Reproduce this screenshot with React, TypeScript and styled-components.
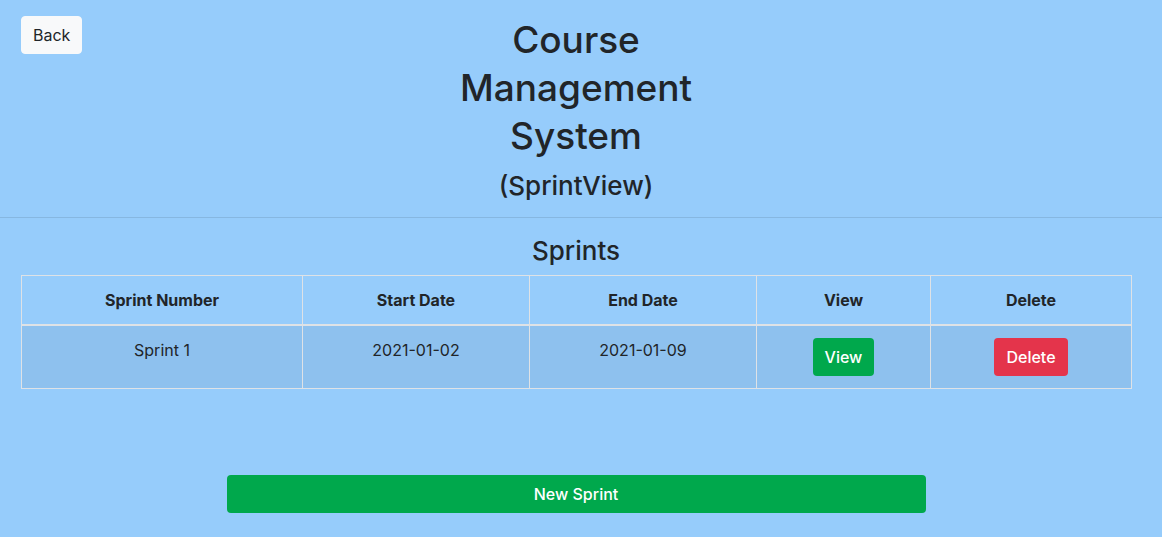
import React from "react";
import styled, { createGlobalStyle } from "styled-components";

const sprints = [
  { id: 1, name: "Sprint 1", start: "2021-01-02", end: "2021-01-09" },
];

const columns = [
  { label: "Sprint Number", width: 281 },
  { label: "Start Date", width: 227 },
  { label: "End Date", width: 227 },
  { label: "View", width: 174 },
  { label: "Delete", width: 201 },
];

const GlobalStyle = createGlobalStyle`
  html, body {
    margin: 0;
    background-color: #96ccfb;
  }
  body {
    font-family: Inter, "Liberation Sans", sans-serif;
    font-size: 16px;
    line-height: 1.5;
    color: #212529;
  }
`;

export default function App() {
  return (
    <>
      <GlobalStyle />
      <Page>
        <Header>
          <BackCell>
            <BackButton>Back</BackButton>
          </BackCell>
          <TitleBlock>
            <Title>Course Management System</Title>
            <SubTitle>(SprintView)</SubTitle>
          </TitleBlock>
          <div />
        </Header>
        <Divider />
        <Content>
          <SectionTitle>Sprints</SectionTitle>
          <Table>
            <colgroup>
              {columns.map((c) => (
                <Col key={c.label} $width={c.width} />
              ))}
            </colgroup>
            <thead>
              <tr>
                {columns.map((c) => (
                  <Th key={c.label}>{c.label}</Th>
                ))}
              </tr>
            </thead>
            <tbody>
              {sprints.map((s) => (
                <Row key={s.id}>
                  <Td>{s.name}</Td>
                  <Td>{s.start}</Td>
                  <Td>{s.end}</Td>
                  <Td>
                    <SmallButton $variant="success">View</SmallButton>
                  </Td>
                  <Td>
                    <SmallButton $variant="danger">Delete</SmallButton>
                  </Td>
                </Row>
              ))}
            </tbody>
          </Table>
          <Footer>
            <WideButton>New Sprint</WideButton>
          </Footer>
        </Content>
      </Page>
    </>
  );
}

const Page = styled.div`
  min-height: 537px;
`;

const Header = styled.header`
  display: grid;
  grid-template-columns: 1fr 260px 1fr;
  padding: 16px 31px 14px 21px;
`;

const BackCell = styled.div`
  display: flex;
  align-items: flex-start;
`;

const BackButton = styled.button`
  font-family: inherit;
  font-size: 16px;
  line-height: 1.5;
  padding: 6px 11px;
  color: #212529;
  background-color: #f8f9fa;
  border: 1px solid #f8f9fa;
  border-radius: 4px;
  cursor: pointer;
`;

const TitleBlock = styled.div`
  text-align: center;
`;

const Title = styled.h1`
  margin: 0 0 9px;
  font-size: 37px;
  font-weight: 500;
  line-height: 48px;
`;

const SubTitle = styled.h3`
  margin: 0;
  font-size: 26px;
  font-weight: 500;
  line-height: 34px;
`;

const Divider = styled.hr`
  margin: 0;
  border: 0;
  border-top: 1px solid rgba(0, 0, 0, 0.1);
`;

const Content = styled.main`
  padding: 0 31px 0 21px;
`;

const SectionTitle = styled.h3`
  margin: 16px 0 7px;
  text-align: center;
  font-size: 26px;
  font-weight: 500;
  line-height: 34px;
`;

const Table = styled.table`
  width: 100%;
  table-layout: fixed;
  border-collapse: collapse;
  text-align: center;
`;

const Col = styled.col<{ $width: number }>`
  width: ${({ $width }) => $width}px;
`;

const Th = styled.th`
  padding: 12px;
  font-weight: 700;
  vertical-align: bottom;
  border: 1px solid #dee2e6;
  border-bottom-width: 2px;
`;

const Row = styled.tr`
  background-color: rgba(0, 0, 0, 0.05);
`;

const Td = styled.td`
  padding: 12px;
  vertical-align: top;
  border: 1px solid #dee2e6;
`;

const SmallButton = styled.button<{ $variant: "success" | "danger" }>`
  font-family: inherit;
  font-size: 16px;
  font-weight: 500;
  line-height: 1.5;
  padding: 6px 11px;
  color: #fff;
  background-color: ${({ $variant }) =>
    $variant === "success" ? "#00a84c" : "#e4344b"};
  border: 1px solid transparent;
  border-radius: 4px;
`;

const Footer = styled.div`
  display: flex;
  justify-content: center;
  margin-top: 86px;
`;

const WideButton = styled.button`
  width: 699px;
  font-family: inherit;
  font-size: 16px;
  font-weight: 500;
  line-height: 1.5;
  padding: 6px 12px;
  color: #fff;
  background-color: #00a84c;
  border: 1px solid transparent;
  border-radius: 4px;
`;
